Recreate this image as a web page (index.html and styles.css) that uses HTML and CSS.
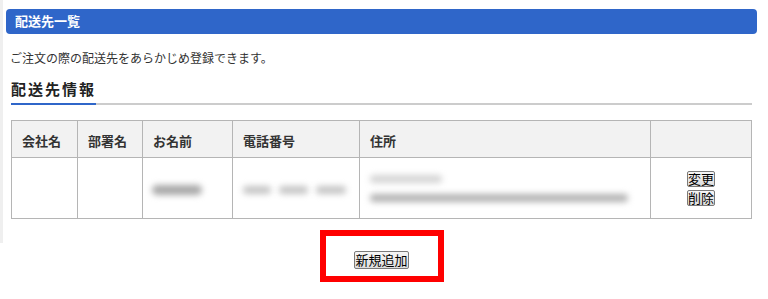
FILE: index.html
```html
<!DOCTYPE html>
<html lang="ja">
<head>
<meta charset="utf-8">
<title>配送先一覧</title>
<link rel="stylesheet" href="styles.css">
</head>
<body>
<div class="layout">
  <div class="strip"></div>
  <div class="main">
    <h1 class="bar">配送先一覧</h1>
    <p class="desc">ご注文の際の配送先をあらかじめ登録できます。</p>
    <div class="content">
      <h2 class="sub"><span class="sub-text">配送先情報</span></h2>
      <table class="list">
        <colgroup>
          <col class="c1"><col class="c2"><col class="c3"><col class="c4"><col class="c5"><col class="c6">
        </colgroup>
        <thead>
          <tr>
            <th>会社名</th>
            <th>部署名</th>
            <th>お名前</th>
            <th>電話番号</th>
            <th>住所</th>
            <th></th>
          </tr>
        </thead>
        <tbody>
          <tr>
            <td></td>
            <td></td>
            <td><span class="blob name"></span></td>
            <td class="phone"><span class="blob ph1"></span><span class="blob ph2"></span><span class="blob ph3"></span></td>
            <td class="addr"><span class="blob ad1"></span><span class="blob ad2"></span></td>
            <td class="act">
              <button class="btn" type="button">変更</button>
              <button class="btn" type="button">削除</button>
            </td>
          </tr>
        </tbody>
      </table>
      <div class="add-row">
        <div class="mark">
          <button class="btn btn-add" type="button">新規追加</button>
        </div>
      </div>
    </div>
  </div>
</div>
</body>
</html>
```
FILE: styles.css
```css
html, body {
  margin: 0;
  padding: 0;
  background: #ffffff;
}
body {
  font-family: "Noto Sans CJK JP", "DejaVu Sans", sans-serif;
  color: #333333;
}
.layout {
  display: flex;
  align-items: flex-start;
}
.strip {
  width: 3px;
  height: 243px;
  background: #efefef;
  flex-shrink: 0;
}
.main {
  flex: 1;
  padding: 9px 12px 0 3px;
}
.bar {
  margin: 0;
  height: 25px;
  line-height: 24px;
  background: #2f66c9;
  border-radius: 4px;
  color: #ffffff;
  font-size: 13px;
  font-weight: bold;
  padding-left: 9px;
}
.desc {
  margin: 16px 0 0 0;
  padding-left: 4px;
  font-size: 12px;
  line-height: 16px;
  color: #333333;
}
.content {
  margin: 0 5px;
}
.sub {
  margin: 13px 0 0 0;
  font-size: 15px;
  line-height: 20px;
  font-weight: bold;
  color: #222222;
  border-bottom: 2px solid #cccccc;
  padding-bottom: 0;
}
.sub-text {
  display: inline-block;
  letter-spacing: 2px;
  width: 85px;
  padding-bottom: 4px;
  border-bottom: 2px solid #2f66c9;
  margin-bottom: -2px;
}
.list {
  margin-top: 15px;
  width: 740px;
  table-layout: fixed;
  border-collapse: collapse;
  font-size: 13px;
}
.c1 { width: 66px; }
.c2 { width: 65px; }
.c3 { width: 90px; }
.c4 { width: 127px; }
.c5 { width: 291px; }
.c6 { width: 101px; }
.list th, .list td {
  border: 1px solid #b5b5b5;
  padding: 0 0 0 10px;
  text-align: left;
}
.list th {
  height: 34px;
  background: #f2f2f2;
  font-weight: bold;
  color: #333333;
  padding-top: 2px;
}
.list td {
  height: 60px;
  vertical-align: middle;
}
.blob {
  display: block;
  border-radius: 5px;
  filter: blur(3px);
}
.name {
  width: 50px;
  height: 10px;
  background: #a8a8a8;
  margin: 4px 0 0 -1px;
}
.phone {
  white-space: nowrap;
}
.phone .blob {
  display: inline-block;
  height: 8px;
  background: #c4c4c4;
  margin: 6px 8px 0 0;
}
.ph1 { width: 28px; }
.ph2 { width: 29px; }
.ph3 { width: 30px; }
.addr .blob {
  height: 8px;
}
.ad1 {
  width: 72px;
  background: #d4d4d4;
  margin: 0 0 11px 0;
}
.ad2 {
  width: 258px;
  background: #b2b2b2;
}
.list td.act {
  padding: 0;
  text-align: center;
  line-height: 0;
}
.btn {
  font-family: "Noto Sans CJK JP", "DejaVu Sans", sans-serif;
  font-size: 13px;
  line-height: 14px;
  height: 16px;
  padding: 0;
  color: #000000;
  background: linear-gradient(#f6f6f6, #dddddd);
  border: 1px solid #7a7a7a;
  border-radius: 2px;
  display: block;
  margin: 0 auto;
}
.act .btn + .btn {
  margin-top: 3px;
}
.add-row {
  display: flex;
  justify-content: center;
  margin-top: 11px;
}
.mark {
  width: 112px;
  height: 40px;
  border: 6px solid #ff0000;
  display: flex;
  justify-content: center;
  align-items: flex-start;
}
.btn-add {
  height: 18px;
  line-height: 16px;
  padding: 0;
  margin: 15px 0 0 0;
}
```
